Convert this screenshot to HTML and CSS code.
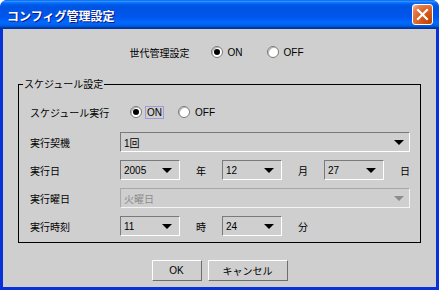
FILE: index.html
```html
<!DOCTYPE html>
<html lang="ja">
<head>
    <meta charset="UTF-8">
    <title>コンフィグ管理設定</title>
    <link rel="stylesheet" href="styles.css">
</head>
<body>
<div class="window">
    <div class="titlebar">
        <span class="title">コンフィグ管理設定</span>
        <span class="close">
            <svg width="13" height="13" viewBox="0 0 13 13"><path d="M2 2 L11 11 M11 2 L2 11" stroke="#fff" stroke-width="2.2" stroke-linecap="square"/></svg>
        </span>
    </div>
    <div class="client">
        <div class="gen-row">
            <span class="gen-label">世代管理設定</span>
            <span class="radio on"></span><span class="rtext">ON</span>
            <span class="radio gap"></span><span class="rtext">OFF</span>
        </div>

        <fieldset class="group">
            <legend>スケジュール設定</legend>
            <div class="rows">
                <div class="row first">
                    <span class="label">スケジュール実行</span>
                    <span class="radio on lead"></span><span class="rtext focus">ON</span>
                    <span class="radio near"></span><span class="rtext">OFF</span>
                </div>
                <div class="row">
                    <span class="label">実行契機</span>
                    <div class="combo wide"><span class="val">1回</span><span class="arrow"></span></div>
                </div>
                <div class="row">
                    <span class="label">実行日</span>
                    <div class="combo"><span class="val">2005</span><span class="arrow"></span></div>
                    <span class="unit">年</span>
                    <div class="combo"><span class="val">12</span><span class="arrow"></span></div>
                    <span class="unit">月</span>
                    <div class="combo"><span class="val">27</span><span class="arrow"></span></div>
                    <span class="unit">日</span>
                </div>
                <div class="row">
                    <span class="label">実行曜日</span>
                    <div class="combo wide disabled"><span class="val">火曜日</span><span class="arrow"></span></div>
                </div>
                <div class="row">
                    <span class="label">実行時刻</span>
                    <div class="combo"><span class="val">11</span><span class="arrow"></span></div>
                    <span class="unit">時</span>
                    <div class="combo"><span class="val">24</span><span class="arrow"></span></div>
                    <span class="unit">分</span>
                </div>
            </div>
        </fieldset>

        <div class="buttons">
            <button type="button" class="btn ok">OK</button>
            <button type="button" class="btn cancel">キャンセル</button>
        </div>
    </div>
</div>
</body>
</html>
```

FILE: styles.css
```css
body {
    margin: 0;
    background: #fff;
    font-family: "Noto Sans CJK JP", "Liberation Sans", sans-serif;
    font-size: 10px;
    color: #000;
}

.window {
    width: 439px;
    height: 290px;
    display: flex;
    flex-direction: column;
    background: #0831d9;
    border-radius: 7px 7px 0 0;
    overflow: hidden;
}

.titlebar {
    height: 29px;
    flex: none;
    display: flex;
    align-items: center;
    justify-content: space-between;
    padding: 0 6px 0 7px;
    box-sizing: border-box;
    border-radius: 7px 7px 0 0;
    background: linear-gradient(to bottom, #0058ee 0%, #3593ff 4%, #288eff 6%, #127dff 8%, #036ffc 10%, #0262ee 14%, #0057e5 20%, #0054e3 24%, #0055eb 56%, #005bf5 66%, #026afe 76%, #0062ef 86%, #0052d6 92%, #0040ab 94%, #003092 100%);
}

.title {
    color: #fff;
    font-weight: bold;
    font-size: 12px;
    text-shadow: 1px 1px #0a1883;
    padding-top: 1px;
}

.close {
    width: 21px;
    height: 21px;
    box-sizing: border-box;
    border: 1px solid #fff;
    border-radius: 3px;
    display: flex;
    align-items: center;
    justify-content: center;
    background: radial-gradient(circle at 85% 85%, #c24300 0%, #dc6527 55%, #e4825a 80%, #ffccb2 100%);
}

.client {
    flex: 1;
    margin: 0 3px 3px;
    background: #cfcfcf;
    display: flex;
    flex-direction: column;
}

.gen-row {
    display: flex;
    align-items: center;
    justify-content: center;
    height: 16px;
    margin-top: 15px;
    padding-right: 6px;
}

.gen-label {
    margin-right: 21px;
}

.radio {
    width: 12px;
    height: 12px;
    box-sizing: border-box;
    border-radius: 50%;
    border: 1px solid #7a7a7a;
    background: #fff;
    box-shadow: inset 1px 1px 0 #b8b8b8;
    display: inline-flex;
    align-items: center;
    justify-content: center;
    flex: none;
}

.radio.on::after {
    content: "";
    width: 6px;
    height: 6px;
    border-radius: 50%;
    background: #000;
}

.radio.gap {
    margin-left: 24px;
}

.rtext {
    font-family: "Liberation Sans", sans-serif;
    font-size: 10px;
    margin-left: 5px;
}

.group {
    margin: 17px 15px 0 15px;
    padding: 0;
    border: 1px solid #000;
    min-width: 0;
}

.group legend {
    margin-left: 4px;
    padding: 0 1px;
    font-size: 10px;
    line-height: 14px;
}

.rows {
    display: flex;
    flex-direction: column;
    gap: 8px;
    padding: 11px 0 6px 11px;
}

.row {
    display: flex;
    align-items: center;
    height: 20px;
}

.row.first {
    margin-bottom: 2px;
}

.label {
    width: 90px;
    flex: none;
}

.radio.lead {
    margin-left: 10px;
}

.radio.near {
    margin-left: 14px;
}

.rtext.focus {
    margin-left: 3px;
    padding: 0 1px;
    border: 1px solid #a09ad8;
    line-height: 11px;
}

.combo {
    width: 60px;
    height: 20px;
    box-sizing: border-box;
    border: 1px solid;
    border-color: #7a7a7a #fff #fff #7a7a7a;
    display: flex;
    align-items: center;
    justify-content: space-between;
    padding: 0 7px 0 3px;
    flex: none;
}

.combo.wide {
    width: 290px;
    padding-right: 5px;
}

.combo .val {
    font-family: "Liberation Sans", "Noto Sans CJK JP", sans-serif;
    font-size: 10px;
}

.arrow {
    width: 0;
    height: 0;
    border-left: 5px solid transparent;
    border-right: 5px solid transparent;
    border-top: 5px solid #000;
}

.combo.disabled {
    border-color: #a8a8a8 #f4f4f4 #f4f4f4 #a8a8a8;
}

.combo.disabled .val {
    color: #8c8c8c;
}

.combo.disabled .arrow {
    border-top-color: #8c8c8c;
}

.unit {
    width: 42px;
    flex: none;
    padding-left: 16px;
    box-sizing: border-box;
}

.buttons {
    display: flex;
    justify-content: center;
    gap: 6px;
    margin-top: 17px;
}

.btn {
    height: 21px;
    box-sizing: border-box;
    border: 1px solid;
    border-color: #fff #6e6e6e #6e6e6e #fff;
    background: #cfcfcf;
    font-family: "Noto Sans CJK JP", "Liberation Sans", sans-serif;
    font-size: 10px;
    color: #000;
    padding: 0;
}

.btn.ok {
    width: 50px;
    font-family: "Liberation Sans", sans-serif;
}

.btn.cancel {
    width: 80px;
}
```
